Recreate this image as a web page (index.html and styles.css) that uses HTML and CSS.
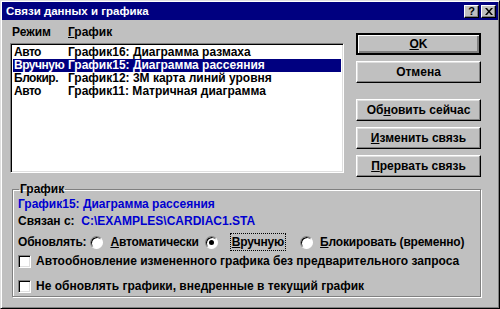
FILE: index.html
```html
<!DOCTYPE html>
<html lang="ru">
<head>
  <meta charset="UTF-8">
  <title>Связи данных и графика</title>
  <link rel="stylesheet" href="styles.css">
</head>
<body>
  <div class="dialog">
    <div class="titlebar">
      <span class="title">Связи данных и графика</span>
      <div class="title-buttons">
        <span class="tbtn">?</span>
        <span class="tbtn">
          <svg width="8" height="7" viewBox="0 0 8 7"><path d="M0 0h2l2 2.5L6 0h2L5 3.5 8 7H6L4 4.5 2 7H0l3-3.5z" fill="#000"/></svg>
        </span>
      </div>
    </div>

    <div class="content">
      <div class="top">
        <div class="links">
          <div class="headers">
            <span class="col-mode">Режим</span>
            <span><u>Г</u>рафик</span>
          </div>
          <ul class="listbox">
            <li><span class="col-mode">Авто</span><span>График16: Диаграмма размаха</span></li>
            <li class="selected"><span class="col-mode">Вручную</span><span>График15: Диаграмма рассеяния</span></li>
            <li><span class="col-mode">Блокир.</span><span>График12: 3М карта линий уровня</span></li>
            <li><span class="col-mode">Авто</span><span>График11: Матричная диаграмма</span></li>
          </ul>
        </div>

        <div class="buttons">
          <button class="btn default"><u>O</u>K</button>
          <button class="btn">Отмена</button>
          <button class="btn gap-top">Об<u>н</u>овить сейчас</button>
          <button class="btn"><u>И</u>зменить связь</button>
          <button class="btn"><u>П</u>рервать связь</button>
        </div>
      </div>

      <fieldset class="group">
        <legend>График</legend>
        <div class="line blue">График15: Диаграмма рассеяния</div>
        <div class="line">Связан с:&nbsp; <span class="blue">C:\EXAMPLES\CARDIAC1.STA</span></div>
        <div class="line radios">
          <span class="label">Обновлять:</span>
          <span class="radio"></span><span class="opt"><u>А</u>втоматически</span>
          <span class="radio checked"></span><span class="opt focus"><u>В</u>ручную</span>
          <span class="radio"></span><span class="opt"><u>Б</u>локировать (временно)</span>
        </div>
        <div class="line check"><span class="box"></span>Автообновление измененного графика без предварительного запроса</div>
        <div class="line check second"><span class="box"></span>Не обновлять графики, внедренные в текущий график</div>
      </fieldset>
    </div>
  </div>
</body>
</html>
```

FILE: styles.css
```css
/* Reset */

*,
*::before,
*::after {
  box-sizing: border-box;
  margin: 0;
  padding: 0;
}

:root {
  --face: #c0c0c0;
  --shadow: #808080;
  --light: #dfdfdf;
  --navy: #000080;
  --link-blue: #0000d0;
  --font: "Liberation Sans", Arial, sans-serif;
}

body {
  width: 500px;
  height: 309px;
  overflow: hidden;
  font-family: var(--font);
  font-size: 12px;
  font-weight: bold;
  color: #000;
  background: var(--face);
}

u {
  text-decoration: underline;
  text-underline-offset: 1px;
}

/* Window frame */

.dialog {
  width: 500px;
  height: 309px;
  background: var(--face);
  border: 1px solid;
  border-color: var(--light) #000 #000 var(--light);
  box-shadow: inset 1px 1px #fff, inset -1px -1px var(--shadow);
  padding: 1px;
}

.titlebar {
  height: 18px;
  background: var(--navy);
  display: flex;
  align-items: center;
  justify-content: space-between;
  padding: 0 2px 0 4px;
}

.title {
  color: #fff;
  font-size: 11.5px;
}

.title-buttons {
  display: flex;
  gap: 2px;
}

.tbtn {
  width: 15px;
  height: 13px;
  background: var(--face);
  border: 1px solid;
  border-color: #fff #000 #000 #fff;
  box-shadow: inset -1px -1px var(--shadow);
  display: flex;
  align-items: center;
  justify-content: center;
  font-size: 11px;
  line-height: 11px;
}

/* Content */

.content {
  padding: 6px 0 0 8px;
}

.top {
  display: flex;
  gap: 12px;
}

.links {
  width: 334px;
}

.headers {
  display: flex;
  line-height: 12px;
  padding-left: 2px;
  margin-bottom: 5px;
}

.col-mode {
  width: 56px;
  flex-shrink: 0;
}

.listbox .col-mode {
  width: 54px;
  letter-spacing: -0.5px;
}

.listbox {
  list-style: none;
  height: 130px;
  background: #fff;
  border: 1px solid;
  border-color: var(--shadow) #fff #fff var(--shadow);
  box-shadow: inset 1px 1px #000, inset -1px -1px var(--light);
  padding: 2px 2px;
}

.listbox li {
  display: flex;
  height: 13px;
  line-height: 13px;
  padding-left: 1px;
  white-space: nowrap;
}

.listbox li.selected {
  background: var(--navy);
  color: #fff;
}

/* Buttons */

.buttons {
  display: flex;
  flex-direction: column;
  gap: 6px;
  padding-top: 7px;
}

.btn {
  width: 125px;
  height: 22px;
  font-family: var(--font);
  font-size: 12px;
  font-weight: bold;
  color: #000;
  background: var(--face);
  border: 1px solid;
  border-color: #fff #000 #000 #fff;
  box-shadow: inset -1px -1px var(--shadow), inset 1px 1px var(--light);
}

.btn.default {
  border: 2px solid #000;
  box-shadow: inset 1px 1px #fff, inset -1px -1px var(--shadow), inset -2px -2px var(--shadow);
}

.btn.gap-top {
  margin-top: 10px;
}

/* Group box */

.group {
  width: 469px;
  margin: 6px 0 0 2px;
  border: 1px solid var(--shadow);
  box-shadow: inset 1px 1px #fff, 1px 1px #fff;
  padding: 0 0 0 5px;
  height: 114px;
}

.group legend {
  padding: 0 1px;
  margin-left: 1px;
  line-height: 12px;
}

.line {
  display: flex;
  align-items: center;
  height: 17px;
  white-space: pre;
}

.blue {
  color: var(--link-blue);
}

.radios {
  height: 20px;
  margin-top: 3px;
  letter-spacing: -0.2px;
}

.radios .label {
  margin-right: 4px;
}

.radio {
  width: 13px;
  height: 13px;
  border-radius: 50%;
  background: #fff;
  border: 1px solid;
  border-color: var(--shadow) #fff #fff var(--shadow);
  box-shadow: inset 1px 1px #000;
  margin-right: 7px;
  display: flex;
  align-items: center;
  justify-content: center;
  flex-shrink: 0;
}

.radio.checked {
  margin-right: 14px;
}

.radio.checked::after {
  content: "";
  width: 5px;
  height: 5px;
  border-radius: 50%;
  background: #000;
}

.opt {
  margin-right: 6px;
}

.opt.focus {
  outline: 1px dotted #000;
  outline-offset: 1px;
  margin-right: 16px;
}

.check {
  height: 18px;
}

.check.second {
  margin-top: 7px;
}

.box {
  width: 13px;
  height: 13px;
  background: #fff;
  border: 1px solid;
  border-color: var(--shadow) #fff #fff var(--shadow);
  box-shadow: inset 1px 1px #000, inset -1px -1px var(--light);
  margin-right: 5px;
  flex-shrink: 0;
}
```
